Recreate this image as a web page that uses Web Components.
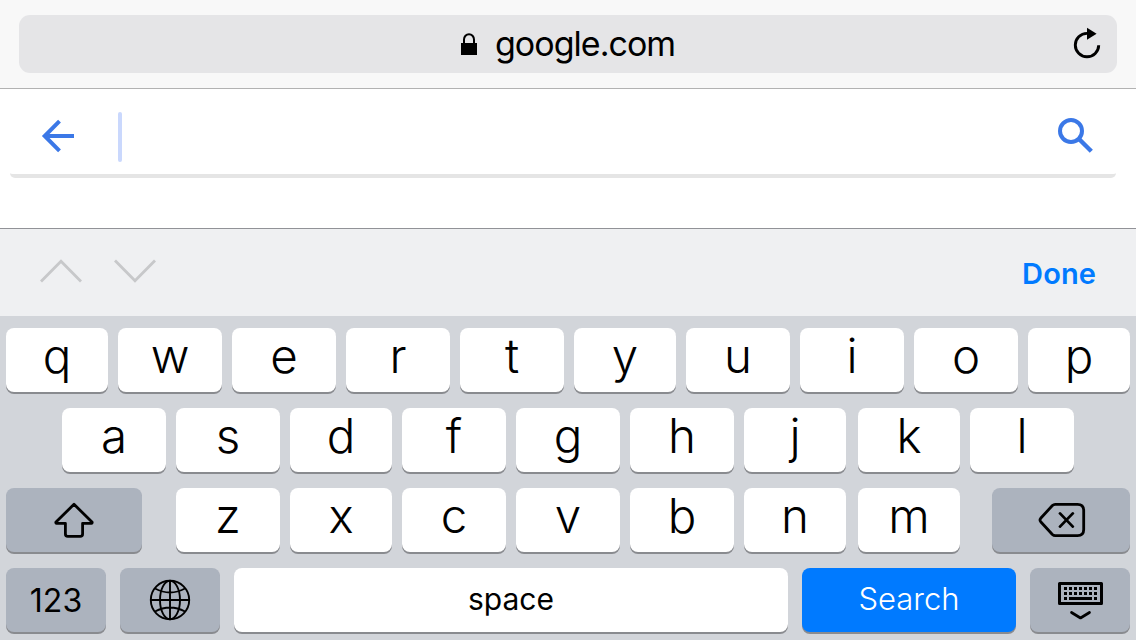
<!DOCTYPE html>
<html lang="en">
<head>
<meta charset="utf-8">
<title>google.com</title>
<style>
html,body{margin:0;height:100%;overflow:hidden;background:#fff}
body{font-family:Inter,"Liberation Sans",sans-serif;color:#000}
</style>
</head>
<body>
<phone-browser></phone-browser>
<script>
const define = (name, html, setup) => customElements.define(name, class extends HTMLElement {
  constructor() {
    super();
    this.attachShadow({mode: 'open'});
  }
  connectedCallback() {
    const t = document.createElement('template');
    t.innerHTML = html;
    this.shadowRoot.replaceChildren(t.content.cloneNode(true));
    if (setup) setup(this, this.shadowRoot);
  }
});

const icons = {
  lock: [18, 24, '<path d="M4 11V6.5a5 5.3 0 0 1 10 0V11" fill="none" stroke="currentColor" stroke-width="2"/><path d="M1 10h16v12H1z"/>'],
  reload: [28, 34, '<path d="M25.7 18.2A11.7 11.7 0 1 1 14 6.4" fill="none" stroke="currentColor" stroke-width="2.9"/><path d="M14 .8v12l9.6-6z"/>'],
  back: [34, 34, '<path d="M33 17H4M18.5 2.2 3.7 17l14.8 14.8" fill="none" stroke="currentColor" stroke-width="4"/>'],
  search: [38, 38, '<path d="M21.5 20.5 34.3 33.3" fill="none" stroke="currentColor" stroke-width="4.4"/><circle cx="14" cy="13" r="11" fill="none" stroke="currentColor" stroke-width="4"/>'],
  up: [44, 26, '<path d="M2 23.5 22 3.3l20 20.2" fill="none" stroke="currentColor" stroke-width="2.8"/>'],
  down: [44, 26, '<path d="M2 2.5 22 22.7 42 2.5" fill="none" stroke="currentColor" stroke-width="2.8"/>'],
  shift: [40, 36, '<path d="M20 2.3 38 20a.8.8 0 0 1-.6 1.3H28.6V32q0 2.4-2.4 2.4H13.8q-2.4 0-2.4-2.4V21.3H2.6A.8.8 0 0 1 2 20z" fill="none" stroke="currentColor" stroke-width="2.8" stroke-linejoin="round"/>'],
  globe: [42, 42, '<g fill="none" stroke="currentColor" stroke-width="1.9"><circle cx="21" cy="21" r="19.2"/><ellipse cx="21" cy="21" rx="10" ry="19.2"/><path d="M21 2v38M2 21h38M6 9.5q15 8 30 0M6 32.5q15-8 30 0"/></g>'],
  erase: [48, 36, '<g fill="none" stroke="currentColor" stroke-width="2.8" stroke-linecap="round" stroke-linejoin="round"><path d="M17.2 2.3H39.5Q45.7 2.3 45.7 8.5V27.5Q45.7 33.7 39.5 33.7H17.2Q15.7 33.7 14.4 32.5L2.7 19.7Q1.3 18 2.7 16.3L14.4 3.5Q15.7 2.3 17.2 2.3zM22 11.4l12.8 13.2M34.8 11.4 22 24.6"/></g>'],
  keyboard: [46, 40, '<path d="M2.5 3.5h42v20h-42z" fill="none" stroke="currentColor" stroke-width="3" stroke-linejoin="round"/><path d="M7 8.5h33M7 13.5h33" stroke="currentColor" stroke-width="3" stroke-dasharray="3 2"/><path d="M7 18.5h3m2 0h23m2 0h3" stroke="currentColor" stroke-width="3"/><path d="M14.5 32.5l9 5.5 9-5.5" fill="none" stroke="currentColor" stroke-width="2.7" stroke-linecap="round" stroke-linejoin="round"/>']
};

define('line-icon', '<style>:host{display:block;flex:none}svg{display:block;fill:currentColor}</style>', (el, root) => {
  const [w, h, body] = icons[el.getAttribute('name')];
  root.innerHTML += `<svg width="${w}" height="${h}" viewBox="0 0 ${w} ${h}">${body}</svg>`;
});

define('address-bar', `<style>
:host{display:block;box-sizing:border-box;height:89px;padding:15px 19px;background:#f8f8f8;border-bottom:1px solid #b2b2b2}
.field{display:grid;grid-template-columns:1fr auto;align-items:center;height:58px;border-radius:11px;background:#e5e5e7;padding-right:16px}
.site{display:flex;align-items:center;padding-left:441px;gap:17px;font-size:34px;letter-spacing:-.98px}
span{height:58px;line-height:58px}
line-icon[name=lock]{margin-top:2px}
</style>
<div class="field"><div class="site"><line-icon name="lock"></line-icon><span><slot></slot></span></div><line-icon name="reload"></line-icon></div>`);

define('search-field', `<style>
:host{display:block;height:139px;background:#fff}
.box{display:flex;align-items:center;box-sizing:border-box;height:89px;margin:0 20px 0 10px;padding:5px 21px 0 31px;border-bottom:4px solid #e5e5e5;border-radius:0 0 5px 5px;color:#3b78e7}
.caret{width:4px;height:50px;border-radius:2px;background:#cad8fd;margin:5px auto 0 43px}
line-icon[name=back]{margin-top:4px}
line-icon[name=search]{margin-top:5px}
</style>
<div class="box"><line-icon name="back"></line-icon><i class="caret"></i><line-icon name="search"></line-icon></div>`);

define('input-toolbar', `<style>
:host{display:flex;box-sizing:border-box;height:88px;border-top:1px solid #919297;background:#eff0f2;align-items:center;padding:0 39px;gap:30px;color:#c7c8ca}
line-icon{margin-top:-3px}
b{margin-left:auto;margin-right:1px;font-size:29px;font-weight:600;letter-spacing:.1px;color:#007aff;line-height:88px;padding-top:2px}
</style>
<line-icon name="up"></line-icon><line-icon name="down"></line-icon><b><slot></slot></b>`);

define('key-cap', `<style>
:host{display:flex;flex:none;justify-content:center;height:64px;width:var(--w,104px);border-radius:8px;background:#fff;box-shadow:0 2px 0 #898b8f;font-size:47.5px;font-weight:350;line-height:55px}
:host([kind=dark]){background:#acb3be}
:host([kind=blue]){background:#007aff;color:#fff}
:host([word]){font-size:31px;font-weight:380;line-height:63px}
:host([icon]){align-items:center}
</style><slot></slot>`, el => {
  if (el.hasAttribute('w')) el.style.setProperty('--w', el.getAttribute('w') + 'px');
});

define('key-row', `<style>:host{display:flex;gap:var(--gap,10px);height:64px}</style><slot></slot>`);

const keys = (letters, narrow) => [...letters].map(c => `<key-cap${narrow.includes(c) ? ' w="102"' : ''}>${c}</key-cap>`).join('');

define('touch-keyboard', `<style>
:host{display:flex;flex-direction:column;gap:16px;box-sizing:border-box;height:324px;padding:12px 6px 8px;background:#d2d5da}
.second{padding-left:56px}
.bottom{--gap:14px}
.k{margin-left:2px}
</style>
<key-row>${keys('qwertyuiop', 'qyp')}</key-row>
<key-row class="second">${keys('asdfghj', 'dj')}<key-cap class="k" w="102">k</key-cap><key-cap>l</key-cap></key-row>
<key-row><key-cap kind="dark" icon w="136" style="margin-right:24px"><line-icon name="shift"></line-icon></key-cap>${keys('zxcvbn', 'xn')}<key-cap class="k" w="102">m</key-cap><key-cap kind="dark" icon w="138" style="margin-left:22px"><line-icon name="erase" style="margin-left:1px"></line-icon></key-cap></key-row>
<key-row class="bottom"><key-cap kind="dark" word w="100" style="font-size:32px;line-height:66px;font-weight:370">123</key-cap><key-cap kind="dark" icon w="100"><line-icon name="globe"></line-icon></key-cap><key-cap word w="554" style="font-size:30px">space</key-cap><key-cap kind="blue" word w="214" style="font-weight:360;line-height:61px">Search</key-cap><key-cap kind="dark" icon w="100"><line-icon name="keyboard"></line-icon></key-cap></key-row>`);

define('phone-browser', `<style>:host{display:flex;flex-direction:column;width:1136px;height:640px;overflow:hidden}</style>
<address-bar>google.com</address-bar><search-field></search-field><input-toolbar>Done</input-toolbar><touch-keyboard></touch-keyboard>`);
</script>
</body>
</html>
